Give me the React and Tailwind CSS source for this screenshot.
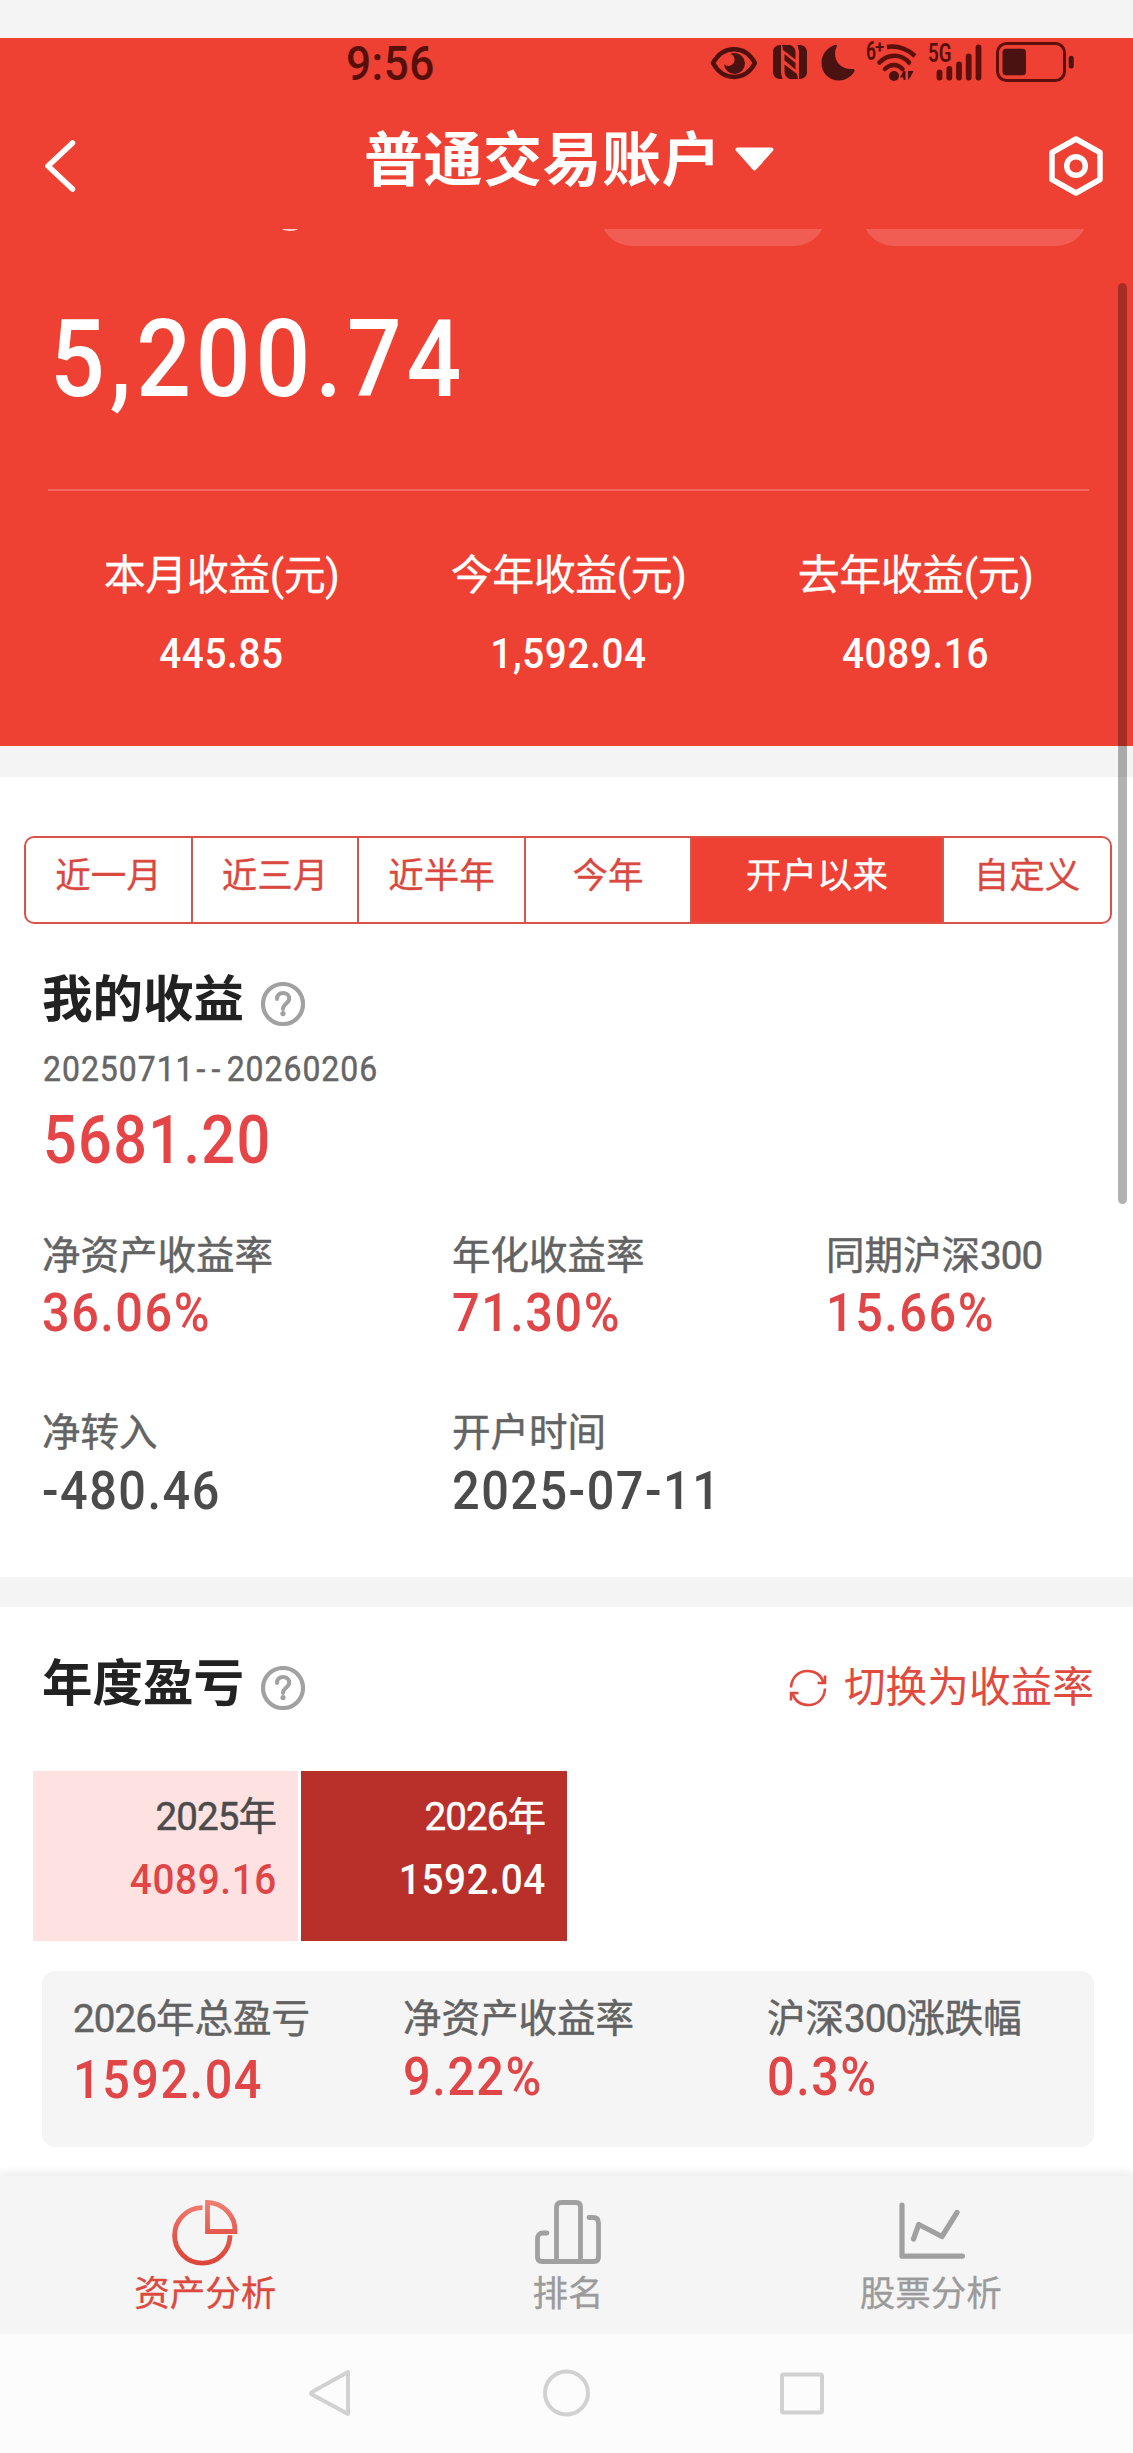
import { useState } from "react";

const ranges = [
  { label: "近一月", width: "w-[167px]" },
  { label: "近三月", width: "w-[166px]" },
  { label: "近半年", width: "w-[167px]" },
  { label: "今年", width: "w-[166px]" },
  { label: "开户以来", width: "w-[252px]" },
  { label: "自定义", width: "flex-1" },
];

const summary = [
  { label: "本月收益(元)", value: "445.85" },
  { label: "今年收益(元)", value: "1,592.04" },
  { label: "去年收益(元)", value: "4089.16" },
];

/* Status bar icons */

const EyeIcon = () => (
  <svg width="48" height="34" viewBox="0 0 48 34">
    <path d="M3 17C13 -1.500 35 -1.500 45 17C35 35.500 13 35.500 3 17Z" fill="none" stroke="#4f0f0c" strokeWidth="4.500" strokeLinejoin="round" />
    <path d="M24.500 7A10.500 10.500 0 1 1 14 18C16 21 22 20.500 24 16.500C25.500 13 24 9 20.500 8C22 7.200 23 7 24.500 7Z" fill="#4a1210" />
  </svg>
);

const NfcIcon = () => (
  <svg width="34" height="34" viewBox="0 0 34 34" fill="#4a1210">
    <path d="M7.500 0H8V28L9.500 34H7C3 34 0 31 0 27V7C0 3 3 0 7.500 0Z" />
    <path d="M9 0H17C21 1.500 22.500 4 22.500 8V14.500L10 5Z" />
    <path d="M26.500 34H26V6L24.500 0H27C31 0 34 3 34 7V27C34 31 31 34 26.500 34Z" />
    <path d="M25 34H17C13 32.500 11.500 30 11.500 26V19.500L24 29Z" />
    <path d="M11.500 9L22.500 18V24.500L11.500 15.500Z" />
  </svg>
);

const MoonIcon = () => (
  <svg width="34" height="37" viewBox="0 0 34 37">
    <path d="M12.500 1.500C15 0 17 0.500 15.500 3C11 13 17 25.500 31 25C33.500 24.800 34.300 26 33 28C29.500 33.500 24 36.500 18 36.500C8 36.500 0.500 29 0.500 19C0.500 11 5 4.500 12.500 1.500Z" fill="#4a1210" />
  </svg>
);

const WifiIcon = () => (
  <div className="relative w-[52px] h-10">
    <span className="absolute left-0 top-0 text-[25px] leading-[19px] font-semibold scale-x-70 origin-left">6</span>
    <span className="absolute left-[9px] -top-[5px] text-[17px] leading-[20px] font-bold">+</span>
    <svg className="absolute left-0 top-0" width="52" height="40" viewBox="0 0 52 40">
      <g fill="none" stroke="#5d0f0b" strokeWidth="4.500">
        <path d="M21 5C31 3.500 41 7 49 14" />
        <path d="M13.500 20.500C22 11.500 35 11.500 43 20.500" strokeLinecap="round" />
        <path d="M19 27C24.500 21.500 31.500 21.500 36.500 27" strokeLinecap="round" />
      </g>
      <circle cx="28" cy="34" r="5" fill="#4a1210" />
      <path d="M39.500 29V38H37.500V35.500H34L37.500 29ZM42 29H47.500L44.500 35L42 38Z" fill="#4a1210" />
    </svg>
  </div>
);

const SignalIcon = () => (
  <div className="relative w-[54px] h-10">
    <span className="absolute left-0 top-[2px] text-[25px] leading-[20px] font-semibold scale-x-75 origin-left">5G</span>
    <svg className="absolute left-0 top-0" width="54" height="40" viewBox="0 0 54 40" stroke="#5d0f0b" strokeWidth="5.800" strokeLinecap="round">
      <path d="M11.500 30.500V35.500M21.300 27V35.500M31 22.500V35.500M40.700 14.500V35.500M50.500 5.500V35.500" />
    </svg>
  </div>
);

const BatteryIcon = () => (
  <svg width="78" height="40" viewBox="0 0 78 40">
    <rect x="1.500" y="1.500" width="67" height="37" rx="9" fill="none" stroke="#5d0f0b" strokeWidth="3" />
    <rect x="6.500" y="6.700" width="23.500" height="26.600" rx="3.500" fill="#4a1210" />
    <rect x="72.700" y="13.700" width="5" height="12.700" rx="2.500" fill="#4a1210" />
  </svg>
);

/* Shared icons */

const HelpIcon = () => (
  <svg width="44" height="44" viewBox="0 0 44 44" fill="none" stroke="#a1a1a1">
    <circle cx="22" cy="22" r="20" strokeWidth="4.200" />
    <path d="M16 17C16 13 18.500 11 22 11C25.500 11 28.200 13.200 28.200 16.700C28.200 21.500 22 21.500 22 27" strokeLinecap="round" strokeWidth="4" />
    <circle cx="22" cy="31.600" r="2.600" fill="#a1a1a1" stroke="none" />
  </svg>
);

const SwitchIcon = () => (
  <svg width="38" height="38" viewBox="0 0 38 38" fill="none" stroke="#e2493e" strokeWidth="2.600">
    <path d="M2 18.500C2.500 9 9 2 18.500 2C26 2 32 6 34.500 13.500" />
    <path d="M36 19.500C35.500 29 29 36 19.500 36C12 36 6 32 3.500 24.500" />
    <path d="M36 6.500V14H28.500M2 31.500V24H9.500" />
  </svg>
);

const PieIcon = () => (
  <svg width="66" height="66" viewBox="0 0 66 66" fill="none" stroke="url(#pie)" strokeWidth="4.800">
    <defs>
      <linearGradient id="pie" gradientUnits="userSpaceOnUse" x1="0" y1="0" x2="0" y2="66">
        <stop offset="0" stopColor="#f08074" />
        <stop offset="0.550" stopColor="#e5564a" />
        <stop offset="1" stopColor="#db4539" />
      </linearGradient>
    </defs>
    <path d="M30.500 7.700A27.700 27.700 0 1 0 58 35.300" />
    <path d="M35.500 2.500A28 28 0 0 1 63 31.500H35.500Z" />
  </svg>
);

const RankIcon = () => (
  <svg width="66" height="66" viewBox="0 0 66 66" fill="none" stroke="#a0a0a0" strokeWidth="4.800" strokeLinecap="round">
    <path d="M21.500 61.500V7Q21.500 2.500 26 2.500H41Q45.500 2.500 45.500 7V61.500" />
    <path d="M12 33H8Q2.500 33 2.500 39V57Q2.500 61.500 7 61.500H59Q63.500 61.500 63.500 57V23Q63.500 17.500 58 17.500H54" />
  </svg>
);

const TrendIcon = () => (
  <svg width="68" height="66" viewBox="0 0 68 66" fill="none" stroke="#a0a0a0" strokeWidth="5.200" strokeLinecap="round" strokeLinejoin="round">
    <path d="M5 5V56.200H65.500" />
    <path d="M16.500 39L21.700 24.500L45 36.500L60 12.500" />
  </svg>
);

const tabs = [
  { label: "资产分析", icon: PieIcon, color: "text-[#dc4a3f]" },
  { label: "排名", icon: RankIcon, color: "text-[#9b9b9b]" },
  { label: "股票分析", icon: TrendIcon, color: "text-[#9b9b9b]" },
];

// digits sit a little tighter than the Chinese text around them
const Mixed = ({ text }) =>
  text.split(/(\d+)/).map((part, i) =>
    i % 2 ? (
      <span key={i} className="tracking-[-0.900px]">{part}</span>
    ) : (
      part
    )
  );

const Stat = ({ label, value, color = "text-[#e04648]", gap = "mt-[11px]" }) => (
  <div>
    <p className="text-[38.500px] leading-[38px] text-[#636363] [-webkit-text-stroke:0.5px]">
      <Mixed text={label} />
    </p>
    <p className={`${gap} text-[54px] leading-[54px] tracking-[1.700px] scale-x-90 origin-left font-medium ${color}`}>{value}</p>
  </div>
);

const App = () => {
  const [range, setRange] = useState("开户以来");

  return (
    <div className="relative w-[1133px] h-[2453px] overflow-hidden bg-white whitespace-nowrap font-[Roboto,'Noto_Sans_CJK_SC',sans-serif]">

      <div className="h-[38px] bg-[#f4f4f4]" />

      {/* Header */}

      <header className="h-[708px] bg-[#ee4133] text-white">

        <div className="h-12 flex items-start pl-[346px] pt-1 text-[#570f0b]">
          <div className="w-[364px]">
            <span className="inline-block text-[48px] leading-[44px] tracking-[0.500px] scale-x-92 origin-left font-medium">9:56</span>
          </div>
          <div className="flex items-start">
            <div className="pt-1"><EyeIcon /></div>
            <div className="pt-[3px] ml-[15px]"><NfcIcon /></div>
            <div className="pt-[2px] ml-[14px]"><MoonIcon /></div>
            <div className="ml-[11px]"><WifiIcon /></div>
            <div className="ml-[10px]"><SignalIcon /></div>
            <div className="ml-[14px]"><BatteryIcon /></div>
          </div>
        </div>

        <div className="h-[143px] flex items-center pt-[17px] pl-11 pr-[29px]">
          <svg width="32" height="54" viewBox="0 0 32 54" fill="none" stroke="#fff" strokeWidth="5.500" strokeLinecap="round" strokeLinejoin="round">
            <path d="M28.500 4L4 27L28.500 50" />
          </svg>
          <h1 className="ml-[288px] -mt-[11px] text-[59px] leading-[60px] tracking-[0.500px] font-bold">普通交易账户</h1>
          <svg className="ml-[14px] -mt-[15px]" width="39" height="24" viewBox="0 0 39 24" fill="#fff" stroke="#fff" strokeWidth="4" strokeLinejoin="round">
            <path d="M2.500 2.500H36.500L19.500 21.500Z" />
          </svg>
          <svg className="ml-auto" width="56" height="62" viewBox="0 0 56 62" fill="none" stroke="#fff" strokeWidth="5.500" strokeLinejoin="round">
            <path d="M28 4L52 17.500V44.500L28 58L4 44.500V17.500Z" />
            <circle cx="28" cy="31" r="9.300" />
          </svg>
        </div>

        {/* bottoms of the buttons scrolled under the title bar */}
        <div className="h-[17px] overflow-hidden flex items-end pl-[280px]">
          <div className="w-5 h-[17px]">
            <div className="h-[2px] overflow-hidden flex items-end justify-center">
              <div className="size-9 shrink-0 rounded-full bg-white/75" />
            </div>
          </div>
          <div className="ml-[300px] w-[226px] h-16 shrink-0 rounded-full bg-[#f15d52]" />
          <div className="ml-[36px] w-[226px] h-16 shrink-0 rounded-full bg-[#f15d52]" />
        </div>

        <p className="mt-[60px] ml-[50px] text-[107px] leading-[107px] tracking-[5.500px] scale-x-90 origin-left font-medium">5,200.74</p>

        <div className="mt-[76px] ml-12 mr-11 h-[2px] bg-[#f2695e]" />

        <div className="mt-16 ml-12 mr-11 grid grid-cols-3 text-center">
          {summary.map((item) => (
            <div key={item.label}>
              <p className="text-[42px] leading-[42px] tracking-[-0.500px] [-webkit-text-stroke:0.3px]">{item.label}</p>
              <p className="mt-[35px] text-[43px] leading-[43px] tracking-[0.700px] scale-x-90 font-medium">{item.value}</p>
            </div>
          ))}
        </div>

      </header>

      <div className="h-[31px] bg-[#f4f4f4]" />

      {/* My profit */}

      <section className="h-[800px] pt-[59px]">

        <div className="ml-6 w-[1088px] h-[88px] flex border-2 border-[#d9534a] rounded-[10px] overflow-hidden">
          {ranges.map((item) => (
            <button
              key={item.label}
              onClick={() => setRange(item.label)}
              className={`${item.width} pb-2 text-[35.500px] leading-[36px] border-r-2 border-[#cf5850] last:border-r-0 [-webkit-text-stroke:0.3px] ${
                range === item.label ? "bg-[#ee4133] text-white" : "text-[#d9493f]"
              }`}
            >
              {item.label}
            </button>
          ))}
        </div>

        <div className="mt-[50px] ml-[42px] h-[52px] flex items-center">
          <h2 className="text-[50.500px] leading-[52px] font-bold text-[#222]">我的收益</h2>
          <div className="ml-[17px] mt-2"><HelpIcon /></div>
        </div>

        <p className="mt-[25px] ml-[43px] text-[35.500px] leading-[36px] tracking-[1.100px] scale-x-90 origin-left text-[#666] [-webkit-text-stroke:0.5px]">
          20250711<span className="tracking-[7px] pl-[2px]">--</span>20260206
        </p>
        <p className="mt-[21px] ml-[43px] text-[66px] leading-[66px] tracking-[1.500px] scale-x-90 origin-left font-medium text-[#e64547]">5681.20</p>

        <div className="mt-[63px] ml-[42px] grid grid-cols-[410px_374px_1fr]">
          <Stat label="净资产收益率" value="36.06%" />
          <Stat label="年化收益率" value="71.30%" />
          <Stat label="同期沪深300" value="15.66%" />
        </div>

        <div className="mt-[74px] ml-[42px] grid grid-cols-[410px_1fr]">
          <Stat label="净转入" value="-480.46" color="text-[#4b4b4b]" gap="mt-3" />
          <Stat label="开户时间" value="2025-07-11" color="text-[#4b4b4b]" gap="mt-3" />
        </div>

      </section>

      <div className="h-[30px] bg-[#f4f4f4]" />

      {/* Yearly profit */}

      <section className="h-[569px] pt-[51px]">

        <div className="pl-[42px] pr-[39px] h-[52px] flex items-center">
          <h2 className="text-[50.500px] leading-[52px] font-bold text-[#222]">年度盈亏</h2>
          <div className="ml-[17px] mt-2"><HelpIcon /></div>
          <button className="ml-auto mt-2 flex items-center gap-[17px] text-[#e04a3f]">
            <SwitchIcon />
            <span className="text-[41.700px] leading-[42px]">切换为收益率</span>
          </button>
        </div>

        <div className="mt-[61px] ml-[33px] h-[170px] flex gap-[3px] text-right">
          <div className="w-[265px] pt-[26px] pr-[21px] bg-[#fde2e1]">
            <p className="text-[38.500px] leading-[39px] text-[#4b4b4b] [-webkit-text-stroke:0.5px]"><Mixed text="2025年" /></p>
            <p className="mt-[22px] text-[43px] leading-[43px] tracking-[0.700px] scale-x-90 origin-right font-medium text-[#e04648]">4089.16</p>
          </div>
          <div className="w-[266px] pt-[26px] pr-[21px] bg-[#b83029] text-white">
            <p className="text-[38.500px] leading-[39px] [-webkit-text-stroke:0.5px]"><Mixed text="2026年" /></p>
            <p className="mt-[22px] text-[43px] leading-[43px] tracking-[0.700px] scale-x-90 origin-right font-medium">1592.04</p>
          </div>
        </div>

        <div className="mt-[30px] mx-[42px] w-[1052px] h-[176px] pt-[29px] pl-[31px] grid grid-cols-[330px_364px_1fr] rounded-[13px] bg-[#f5f5f5]">
          <Stat label="2026年总盈亏" value="1592.04" gap="mt-[15px]" />
          <Stat label="净资产收益率" value="9.22%" gap="mt-3" />
          <Stat label="沪深300涨跌幅" value="0.3%" gap="mt-3" />
        </div>

      </section>

      {/* Tab bar */}

      <nav className="h-[158px] pl-6 pr-[21px] pt-6 grid grid-cols-3 bg-[#f5f5f5] shadow-[0_-2px_10px_rgba(0,0,0,0.1)]">
        {tabs.map((tab) => (
          <div key={tab.label} className={`flex flex-col items-center ${tab.color}`}>
            <tab.icon />
            <span className="mt-[10px] text-[35.500px] leading-[36px] [-webkit-text-stroke:0.3px]">{tab.label}</span>
          </div>
        ))}
      </nav>

      {/* System navigation */}

      <div className="relative h-[119px] bg-[#fcfcfc] pl-[308px] pt-[35px] flex">
        <svg width="516" height="50" viewBox="0 0 516 50" fill="none" stroke="#d1d1d1" strokeWidth="4" strokeLinejoin="round">
          <path d="M40 3V45L4 25.500Q2 24.500 4 23Z" />
          <circle cx="258.500" cy="24" r="21.500" />
          <rect x="474" y="5.500" width="40" height="38" rx="1.500" />
        </svg>
      </div>

      {/* Scrollbar */}
      <div className="absolute left-[1118px] top-[283px] w-[9px] h-[921px] rounded-full bg-black/30" />

    </div>
  );
};

export default App;
